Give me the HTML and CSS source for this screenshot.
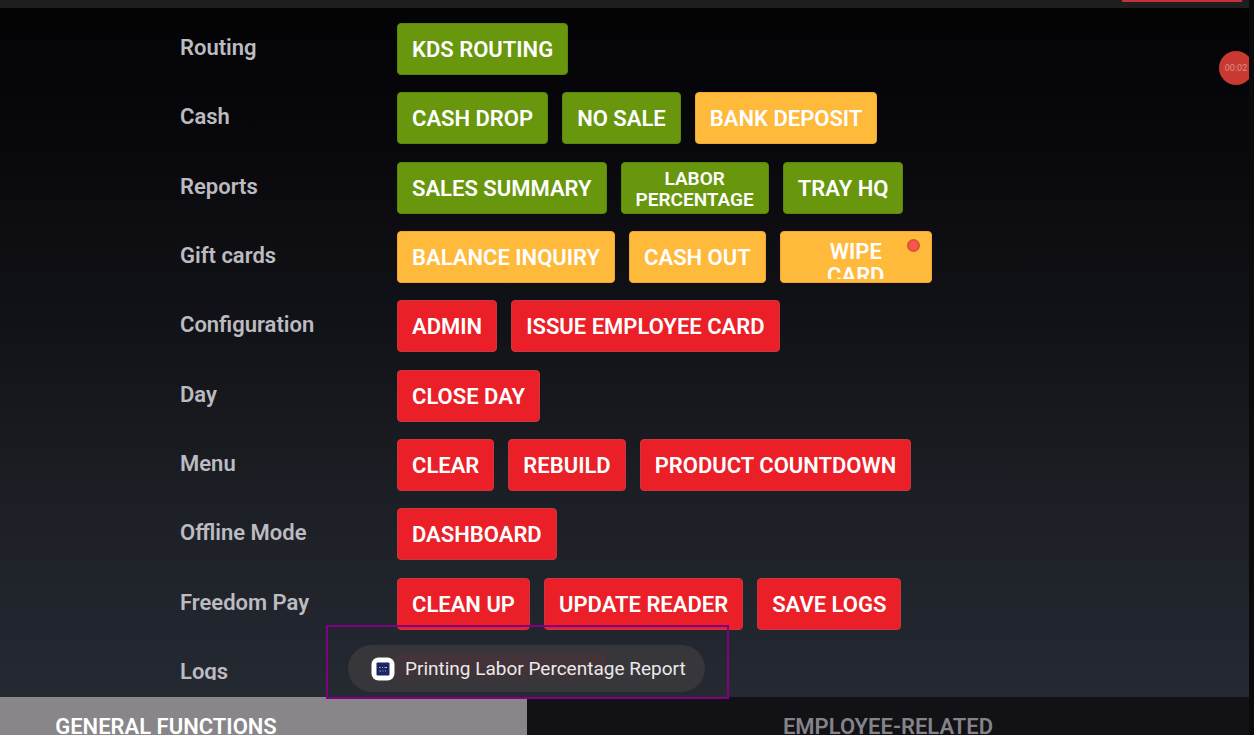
FILE: index.html
```html
<!DOCTYPE html>
<html lang="en">
<head>
  <meta charset="UTF-8" />
  <title>Manager Functions</title>
  <link rel="stylesheet" href="styles.css">
</head>
<body>

<div class="screen">
  <header class="top-bar">
    <div class="top-alert"></div>
  </header>

  <main class="functions">
    <section class="row">
      <h2>Routing</h2>
      <div class="actions">
        <button class="btn green">KDS ROUTING</button>
      </div>
    </section>
    <section class="row">
      <h2>Cash</h2>
      <div class="actions">
        <button class="btn green">CASH DROP</button>
        <button class="btn green">NO SALE</button>
        <button class="btn orange">BANK DEPOSIT</button>
      </div>
    </section>
    <section class="row">
      <h2>Reports</h2>
      <div class="actions">
        <button class="btn green">SALES SUMMARY</button>
        <button class="btn green two-line">LABOR<br>PERCENTAGE</button>
        <button class="btn green">TRAY HQ</button>
      </div>
    </section>
    <section class="row">
      <h2>Gift cards</h2>
      <div class="actions">
        <button class="btn orange">BALANCE INQUIRY</button>
        <button class="btn orange">CASH OUT</button>
        <button class="btn orange wipe"><span class="wipe-text">WIPE<br>CARD</span><span class="tap-dot"></span></button>
      </div>
    </section>
    <section class="row">
      <h2>Configuration</h2>
      <div class="actions">
        <button class="btn red">ADMIN</button>
        <button class="btn red">ISSUE EMPLOYEE CARD</button>
      </div>
    </section>
    <section class="row">
      <h2>Day</h2>
      <div class="actions">
        <button class="btn red">CLOSE DAY</button>
      </div>
    </section>
    <section class="row">
      <h2>Menu</h2>
      <div class="actions">
        <button class="btn red">CLEAR</button>
        <button class="btn red">REBUILD</button>
        <button class="btn red">PRODUCT COUNTDOWN</button>
      </div>
    </section>
    <section class="row">
      <h2>Offline Mode</h2>
      <div class="actions">
        <button class="btn red">DASHBOARD</button>
      </div>
    </section>
    <section class="row">
      <h2>Freedom Pay</h2>
      <div class="actions">
        <button class="btn red">CLEAN UP</button>
        <button class="btn red">UPDATE READER</button>
        <button class="btn red">SAVE LOGS</button>
      </div>
    </section>
    <section class="row cut">
      <h2>Logs</h2>
    </section>
  </main>

  <nav class="tabs">
    <button class="tab active">GENERAL FUNCTIONS</button>
    <button class="tab">EMPLOYEE-RELATED</button>
  </nav>

  <div class="rec-timer">00:02</div>

  <!-- Toast with highlight frame -->
  <div class="highlight">
    <div class="toast" role="status">
      <svg class="toast-icon" width="24" height="24" viewBox="0 0 24 24" aria-hidden="true">
        <rect x="0.5" y="0.5" width="23" height="23" rx="7" fill="#fff"/>
        <rect x="5.5" y="5.5" width="13" height="13" rx="1" fill="#1b2563"/>
        <path d="M8 10.5h1.5M11 10.5h1M13.5 10.5h2.5M8.5 14h1.5M11.5 14h1M14 14h1" stroke="#a9b2dc" stroke-width="1"/>
      </svg>
      <span>Printing Labor Percentage Report</span>
    </div>
  </div>
</div>

</body>
</html>
```

FILE: styles.css
```css
* {
  box-sizing: border-box;
}
body {
  margin: 0;
  font-family: Roboto, 'Liberation Sans', sans-serif;
  background: #0b0b0d;
}
.screen {
  position: relative;
  display: flex;
  flex-direction: column;
  height: 100vh;
  margin-right: 5px;
  overflow: hidden;
}
.top-bar {
  flex: none;
  height: 8px;
  padding-right: 7px;
  background: #1e1e1f;
}
.top-alert {
  width: 120px;
  height: 2px;
  margin-left: auto;
  background: #c5303a;
}
.functions {
  flex: 1;
  display: flex;
  flex-direction: column;
  justify-content: space-between;
  padding: 15px 180px 17px;
  background: linear-gradient(#040405, #060509 12%, #111217 45%, #1c1f25 72%, #252932);
}
.row {
  display: flex;
  height: 52px;
}
.row.cut {
  height: 33px;
  overflow: hidden;
}
.row h2 {
  flex: none;
  width: 217px;
  margin: 0;
  font-size: 22px;
  line-height: 50px;
  font-weight: 600;
  color: #bcbbc0;
}
.actions {
  display: flex;
  gap: 14px;
}
.btn {
  position: relative;
  padding: 2px 14px 0;
  border: 1px solid transparent;
  border-radius: 4px;
  font-family: inherit;
  font-size: 22px;
  font-weight: 600;
  line-height: 24px;
  white-space: nowrap;
  color: #fff;
  cursor: pointer;
}
.green {
  background: #68970d;
  border-color: #5b8610;
}
.orange {
  background: #ffb93b;
  border-color: #f0a63a;
}
.red {
  background: #ea1f27;
  border-color: #c83840;
}
.two-line {
  font-size: 19px;
  line-height: 21px;
}
.wipe {
  width: 152px;
}
.wipe-text {
  display: block;
  height: 39px;
  margin-top: 3px;
  overflow: hidden;
}
.tap-dot {
  position: absolute;
  top: 7px;
  right: 11px;
  width: 13px;
  height: 13px;
  border: 2px solid #d9542f;
  border-radius: 50%;
  background: #fa5550;
}
.tabs {
  flex: none;
  display: flex;
  height: 38px;
  margin-left: -195px;
  overflow: hidden;
}
.tab {
  flex: 1;
  height: 58px;
  padding: 0;
  border: none;
  background: #121116;
  font-family: inherit;
  font-size: 22px;
  font-weight: 600;
  color: #848388;
  cursor: pointer;
}
.tab.active {
  background: #89868a;
  color: #fff;
}
.rec-timer {
  position: absolute;
  top: 51px;
  right: -4px;
  width: 34px;
  height: 34px;
  border-radius: 50%;
  background: #c83a31;
  font-size: 9px;
  line-height: 34px;
  text-align: center;
  color: #dc8d85;
}
.highlight {
  position: absolute;
  left: 326px;
  bottom: 36px;
  padding: 18px 22px 5px 20px;
  border: 2px solid #830083;
}
.toast {
  display: flex;
  align-items: center;
  gap: 10px;
  height: 47px;
  padding: 0 19px 0 23px;
  border-radius: 24px;
  background: linear-gradient(#46333a, #3c3439) 48px 9px / 210px 26px no-repeat, #37363a;
  font-size: 19px;
  white-space: nowrap;
  color: #ebe9eb;
}
.toast-icon {
  flex: none;
}
```
